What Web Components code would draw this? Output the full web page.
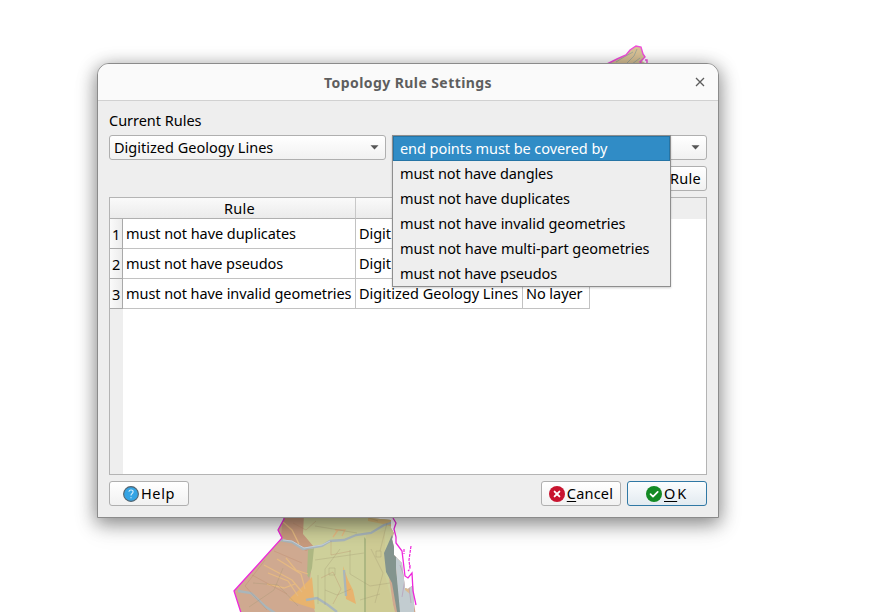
<!DOCTYPE html>
<html lang="en">
<head>
<meta charset="utf-8">
<title>Topology Rule Settings</title>
<style>
html,body{margin:0;width:879px;height:612px;overflow:hidden;background:#fff}
body{position:relative;font:14.5px/17px "Noto Sans","Open Sans",sans-serif;color:#000}
</style>
</head>
<body>
<geology-map></geology-map>
<rule-dialog></rule-dialog>
<script>
function define(name, html, setup) {
  const template = document.createElement('template');
  template.innerHTML = html;
  customElements.define(name, class extends HTMLElement {
    connectedCallback() {
      if (this.shadowRoot) return;
      this.attachShadow({mode: 'open'}).append(template.content.cloneNode(true));
      if (setup) setup(this, this.shadowRoot);
    }
  });
}

// Text run whose tracking is adjusted so that it fills the width in its "w" attribute.
define('fit-text', `<style>
:host{display:inline-block;white-space:nowrap}
span{display:inline-block}
</style><span><slot></slot></span>`, (host, root) => {
  const w = +host.getAttribute('w');
  const span = root.querySelector('span');
  host.style.width = w + 'px';
  const natural = span.getBoundingClientRect().width;
  if (natural) span.style.letterSpacing = ((w - natural) / host.textContent.length) + 'px';
});

define('status-icon', `<style>:host{display:block;width:16px;height:16px;flex:none}svg{display:block}g{display:none}
:host([kind=help]) .help,:host([kind=cancel]) .cancel,:host([kind=ok]) .ok{display:block}</style>
<svg width="16" height="16" viewBox="0 0 16 16" fill="none">
<g class="help"><circle cx="8" cy="8" r="7.4" fill="#35a4e4" stroke="#56646d" stroke-width="1.1"/><path d="M5.9 5.7Q6.1 4 8 4Q10.1 4 10.1 5.8Q10.1 7 8.9 7.7Q8 8.2 8 9.6M8 11.2v1.1" stroke="#d5f0ff" stroke-width="1.1"/></g>
<g class="cancel"><circle cx="8" cy="8" r="8" fill="#c8142f"/><path d="M5.6 5.6l4.8 4.8M10.4 5.6l-4.8 4.8" stroke="#fff" stroke-width="1.9" stroke-linecap="round"/></g>
<g class="ok"><circle cx="8" cy="8" r="8" fill="#138a24"/><path d="M4.5 8.1l2.5 2.5 4.7-4.7" stroke="#fff" stroke-width="1.7" stroke-linecap="round" stroke-linejoin="round"/></g>
</svg>`);

define('push-button', `<style>
:host{box-sizing:border-box;display:flex;align-items:center;justify-content:center;gap:2px;width:80px;height:25px;border:1px solid #afafaf;border-radius:3px;background:linear-gradient(#fff,#f1f1f1);white-space:nowrap}
:host([primary]){border-color:#3078a4;background:linear-gradient(#fbfdfe,#e2eaf0)}
</style><slot></slot>`);

define('combo-box', `<style>
:host{box-sizing:border-box;display:flex;align-items:center;justify-content:space-between;height:25px;padding:0 6px 0 4px;border:1px solid #afafaf;border-radius:3px;background:linear-gradient(#fff,#f1f1f1)}
svg{display:block}
</style><span><slot></slot></span><svg width="9" height="5" viewBox="0 0 9 5"><path d="M.5.3h8L4.5 4.5z" fill="#555"/></svg>`);

define('popup-item', `<style>
:host{box-sizing:border-box;display:flex;align-items:center;height:25px;padding-left:7px}
:host([selected]){background:#308cc6;border:1px solid #2574a5;padding-left:6px;color:#fff}
</style><slot></slot>`);

define('popup-list', `<style>
:host{box-sizing:border-box;display:block;width:279px;height:152px;border:1px solid #8e8e8e;background:#eee;box-shadow:0 1px 2px #0003}
</style><slot></slot>`);

define('rules-table', `<style>
:host{box-sizing:border-box;display:block;height:278px;border:1px solid #b4b4b4;background:linear-gradient(90deg,#eee 13px,#fff 13px)}
.row{display:grid;grid-template-columns:13px 233px 167px 67px;height:30px}
.row>*{box-sizing:border-box;border-right:1px solid #c2c2c2;border-bottom:1px solid #c2c2c2;display:flex;align-items:center;padding-left:3px;background:#fff}
.row>:first-child{background:linear-gradient(90deg,#fafafa,#ececec);border-color:#a9a9a9;padding:2px 0 0 2px}
.head{height:21px;background:#eee;grid-template-columns:246px 167px 67px}
.head>*,.head>:first-child{justify-content:center;background:linear-gradient(#fafafa,#ebebeb);border-color:#c8c8c8;border-bottom-color:#b0b0b0;padding:0}
.head>:first-child{padding-left:14px}
</style>
<div class="row head"><div><fit-text w="31">Rule</fit-text></div><div></div><div></div></div>
<div class="row"><div>1</div><div><fit-text w="170">must not have duplicates</fit-text></div><div><fit-text w="32">Digit</fit-text></div><div></div></div>
<div class="row"><div>2</div><div><fit-text w="157">must not have pseudos</fit-text></div><div><fit-text w="32">Digit</fit-text></div><div></div></div>
<div class="row"><div>3</div><div><fit-text w="225.5">must not have invalid geometries</fit-text></div><div><fit-text w="159.3">Digitized Geology Lines</fit-text></div><div><fit-text w="56.5">No layer</fit-text></div></div>`);

define('rule-dialog', `<style>
:host{position:absolute;left:97px;top:63px;width:622px;height:455px;box-sizing:border-box;border:1px solid #8b8b8b;border-radius:12px 12px 0 0;background:#eee;box-shadow:0 4px 18px 1px #0006,0 9px 26px #0002;display:flex;flex-direction:column}
header{box-sizing:border-box;height:37px;flex:none;display:grid;grid-template-columns:36px 1fr 36px;align-items:center;border-bottom:1px solid #d1d1d1;border-radius:11px 11px 0 0;background:#fafafa;color:#5e5e5e;font-weight:700;font-size:14px}
header>:nth-child(2){justify-self:center}
header svg{justify-self:center}
main{padding:11px;display:flex;flex-direction:column;gap:6px}
.label{height:17px}
.fields{display:grid;grid-template-columns:277px 315px;gap:6px;position:relative}
.add{display:flex;justify-content:flex-end}
.add push-button{justify-content:flex-end;padding-right:5px}
footer{display:flex;gap:6px}
footer>:first-child{margin-right:auto}
popup-list{position:absolute;left:283px;top:0;z-index:2}
u{text-decoration-thickness:1px;text-underline-offset:2px;text-decoration-skip-ink:none}
</style>
<header><span></span><fit-text w="168">Topology Rule Settings</fit-text><svg width="10" height="10" viewBox="0 0 10 10"><path d="M1 1l8 8M9 1L1 9" stroke="#5c5c5c" stroke-width="1.3"/></svg></header>
<main>
<div class="label"><fit-text w="92.5">Current Rules</fit-text></div>
<div class="fields"><combo-box><fit-text w="159.3">Digitized Geology Lines</fit-text></combo-box><combo-box></combo-box>
<popup-list>
<popup-item selected><fit-text w="207.3">end points must be covered by</fit-text></popup-item>
<popup-item><fit-text w="153">must not have dangles</fit-text></popup-item>
<popup-item><fit-text w="170">must not have duplicates</fit-text></popup-item>
<popup-item><fit-text w="225.5">must not have invalid geometries</fit-text></popup-item>
<popup-item><fit-text w="249.5">must not have multi-part geometries</fit-text></popup-item>
<popup-item><fit-text w="157">must not have pseudos</fit-text></popup-item>
</popup-list></div>
<div class="add"><push-button><fit-text w="31">Rule</fit-text></push-button></div>
<rules-table></rules-table>
<footer><push-button><status-icon kind="help"></status-icon><fit-text w="34">Help</fit-text></push-button><push-button><status-icon kind="cancel"></status-icon><fit-text w="46.5"><u>C</u>ancel</fit-text></push-button><push-button primary><status-icon kind="ok"></status-icon><fit-text w="24"><u>O</u>K</fit-text></push-button></footer>
</main>`);

define('geology-map', `<style>:host{position:absolute;inset:0}svg{display:block}</style>
<svg width="879" height="612" viewBox="0 0 879 612" fill="none">
<path d="M607 64l10-5 9-4 4-5 6-4 5 1 2 7 2 3-3 4 6 4z" fill="#d8c196"/>
<path d="M616 62l8-5 9-5M626 64l8-8 3-7M632 64l8-6" stroke="#a4aa99"/>
<path d="M607 64l10-5 9-4 4-5 6-4 5 1 2 7 2 3-2 2-3 3 4 3M645 60h2v4" stroke="#ef4edb" stroke-width="1.4"/>
<clipPath id="land"><path d="M283 510l1 9-6 11 4 8-48 53 8 25h174l-2-13-1-18-5 4-3-1-3-25-8-8v-8l-2-8 2-6-3-5v-8z"/></clipPath>
<g clip-path="url(#land)">
<path d="M230 510h190v102H230z" fill="#cfa990"/>
<path d="M302 510h94l-8 60 6 42h-79l-6-22 4-40-11-5-1-16z" fill="#ced09a"/>
<path d="M283 515l21-1-1 20 11 13-8 4-25-14z" fill="#c79a7d"/>
<path d="M368 515h26l-1 12-10-3-15-3z" fill="#d9bb7b"/>
<path d="M366 534l19-4v45l10 37h-31l2-30z" fill="#cecb94"/>
<path d="M308 550l6-2-2 20-3 10-2-3zM364 537l2 2v73h-2z" fill="#adb782"/>
<path d="M290 598l10-9 12-12 3 32-13-4-13-5zM343 566l5 14 5 10 3 14-10-5-1-12z" fill="#e8b36e"/>
<path d="M264 565l28 15 10 12M277 559l24 15 4 15M286 558l10 12 12 4M267 584l17 4 11-4M283 522l9 8 7 14M335 530h10l-3 6m-4-6l-5 7M268 573l20 8 10 15" stroke="#e5b982" stroke-width="1.3"/>
<path d="M280 540l12 2 11 7 19-3 8-5 14-1 12-5 15-2 13-8 10-3M238 591l13 2 15 14 9 6M306 600l11-2 11 7 9 7M344 570l2 26" stroke="#a9b6bb" stroke-width="2.3"/>
<path d="M283 540l9 1 12 7 18-3 8-4" stroke="#c3cfdb" stroke-width="1"/>
<path d="M310 517l48-3 20 7M315 526l42 7M315 560l49-7M253 583l25 2 20 21M249 607l25-17 9-22M318 575v29M329 568h6v7h-6zM340 549l-15 20v36M350 550v24l20 12 20-3M371 549l12 24-8 30M360 600l20-6M387 523l-7 28M325 590l12 5 14-6M376 551h5v6h-5z" stroke="#9f9270" stroke-width=".6" opacity=".5"/>
<path d="M265 560l-20 26 22 24M252 575l35 19M274 551l28 12M293 523l13 7 10-9M331 541v14l20-4M321 578l12-6 8 17-8 15" stroke="#b98468" stroke-width="1" opacity=".3"/>
<path d="M392 535l5 15-1 18 5 44h-4l-5-29-6-11-2-19z" fill="#83948e"/>
<path d="M396 543l8 9 3 24 7-2v38h-14l-4-44z" fill="#c2ccd0"/>
<path d="M405 579l5-2v17l-5-4z" fill="#dbba91"/>
<path d="M400 565l5 14-3 18M408 579l3 24" stroke="#b8a1bb" stroke-width=".8"/>
</g>
<path d="M283 510l1 9-6 11 4 8-48 53 8 25M393 518l3 5-2 6 2 8v6l6 8 3 25 3 2 4-5 1 18 3 14" stroke="#ee27dc" stroke-width="1.3"/>
<path d="M411 546l-2 14 1 9-2 2M404 549v5M410 565v4" stroke="#ee27dc" stroke-width="1.2" stroke-dasharray="3 1"/>
</svg>`);
</script>
</body>
</html>
